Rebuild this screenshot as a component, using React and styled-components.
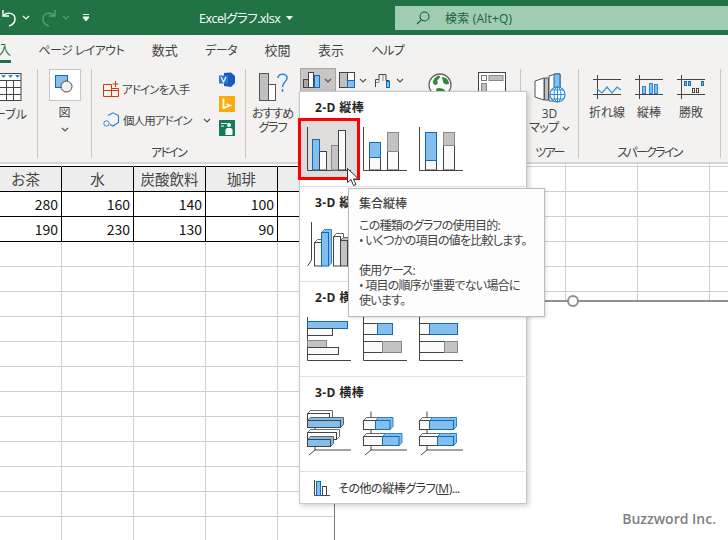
import styled, { createGlobalStyle } from "styled-components";

const GlobalStyle = createGlobalStyle`
  html, body {
    margin: 0;
    padding: 0;
    background: #fff;
  }
  * {
    box-sizing: border-box;
  }
`;

const Page = styled.div`
  position: relative;
  width: 728px;
  height: 540px;
  overflow: hidden;
  background: #fff;
  color: #444;
  font-family: "Open Sans", "Noto Sans CJK JP", sans-serif;
  font-size: 12px;
  font-feature-settings: "palt";
`;

// title bar
const TitleBar = styled.div`
  height: 35px;
  background: #217346;
  display: flex;
  align-items: center;
  color: #fff;
`;

const Qat = styled.div`
  width: 199px;
  display: flex;
  align-items: center;
  padding-left: 2px;
`;

const QatIcon = styled.svg`
  display: block;
  flex: none;
  margin-left: ${(props) => props.$gap || 0}px;
`;

const FileName = styled.div`
  width: 196px;
  display: flex;
  align-items: center;
  gap: 6px;
  font-size: 12.5px;
  letter-spacing: -0.5px;
`;

const SearchBox = styled.div`
  flex: 1;
  height: 24px;
  background: #9fcdb3;
  color: #1f5c3a;
  display: flex;
  align-items: center;
  padding-left: 21px;
  gap: 15px;
  letter-spacing: 0.2px;
`;

// tabs
const TabRow = styled.div`
  height: 29px;
  background: #f3f2f1;
  display: flex;
  gap: 27.5px;
  align-items: stretch;
`;

const Tab = styled.div`
  display: flex;
  align-items: center;
  justify-content: flex-end;
  white-space: nowrap;
  font-size: ${(props) => (props.$kana ? 12 : 13)}px;
  letter-spacing: ${(props) => (props.$kana ? -0.6 : 0)}px;
  padding-top: ${(props) => (props.$active ? 2 : 0)}px;
  ${(props) =>
    props.$active &&
    `
    width: 11px;
    height: 28px;
    border-bottom: 3px solid #217346;
    padding-bottom: 1px;
    color: #217346;
    overflow: hidden;
  `}
`;

// ribbon
const Ribbon = styled.div`
  height: 100px;
  background: #f3f2f1;
  border-bottom: 2px solid #d6d5d4;
  display: flex;
`;

const Group = styled.div`
  width: ${(props) => props.$w}px;
  height: 89px;
  margin-top: 5px;
  flex: none;
  border-right: 1px solid #c8c6c4;
  display: flex;
  flex-direction: column;
  overflow: ${(props) => (props.$clip ? "hidden" : "visible")};
`;

const GroupBody = styled.div`
  flex: 1;
  min-height: 0;
  display: flex;
  justify-content: ${(props) => props.$justify || "flex-start"};
  padding-left: ${(props) => props.$left || 0}px;
`;

const GroupLabel = styled.div`
  height: 14px;
  margin-bottom: -2px;
  line-height: 14px;
  text-align: center;
  white-space: nowrap;
  letter-spacing: -1.7px;
`;

const LargeButton = styled.div`
  width: ${(props) => props.$w}px;
  flex: none;
  display: flex;
  flex-direction: column;
  align-items: ${(props) => props.$align || "center"};
  padding-top: ${(props) => props.$top || 0}px;
  padding-right: ${(props) => props.$right || 0}px;
  line-height: 14px;
  white-space: nowrap;
`;

const TightLabel = styled.div`
  text-align: center;
  letter-spacing: -1px;
`;

const Glyph = styled.svg`
  display: block;
  flex: none;
  margin-bottom: ${(props) => props.$bottom || 0}px;
`;

const ShapeBox = styled.div`
  width: 32px;
  height: 32px;
  background: #fff;
  border: 1px solid #c8c6c4;
  margin-bottom: 5px;
  display: flex;
  align-items: center;
  justify-content: center;
`;

const ChevronGap = styled.div`
  height: 7px;
`;

const AddinList = styled.div`
  width: 116px;
  padding-top: 12px;
  display: flex;
  flex-direction: column;
  gap: 15px;
`;

const AddinRow = styled.div`
  height: 16px;
  display: flex;
  align-items: center;
  gap: 3px;
  white-space: nowrap;
  font-size: 11.5px;
  letter-spacing: -0.9px;
`;

const AddinChevron = styled.div`
  margin-left: auto;
  padding-right: 8px;
`;

const AppIcons = styled.div`
  padding-top: 3px;
  display: flex;
  flex-direction: column;
  gap: 8px;
`;

const ChartButton = styled.div`
  width: ${(props) => props.$w}px;
  height: 24px;
  margin-top: -1px;
  flex: none;
  display: flex;
  align-items: center;
  gap: 3px;
  padding-left: 3px;
  ${(props) =>
    props.$active &&
    `
    background: #c8c6c4;
    border: 1px solid #a8a6a4;
    padding-left: 2px;
  `}
`;

const ChartTools = styled.div`
  display: flex;
  align-items: flex-start;
  margin-left: 1px;
`;

const GlobeIcon = styled.svg`
  display: block;
  flex: none;
  margin: 3px 0 0 15px;
`;

const PivotIcon = styled.svg`
  display: block;
  flex: none;
  margin: 3px 0 0 25px;
`;

const TableIcon = styled.svg`
  display: block;
  flex: none;
  margin: 0 4px 6px 0;
`;

const MapLabel = styled.div`
  display: flex;
  align-items: center;
  gap: 3px;
  letter-spacing: -0.5px;
`;

// sheet
const Sheet = styled.div`
  width: 792px;
  margin-left: -10px;
  display: grid;
  grid-template-columns: repeat(11, 72px);
  grid-auto-rows: 25px;
`;

const Cell = styled.div`
  height: ${(props) => (props.$stub ? 3 : 25)}px;
  border-right: 1px solid ${(props) => (props.$table ? "#000" : "#d0d0d0")};
  border-bottom: 1px solid ${(props) => (props.$edge ? "#000" : "#d0d0d0")};
  background: ${(props) => (props.$head ? "#ededed" : "#fff")};
  color: ${(props) => (props.$head ? "#444" : "#111")};
  display: flex;
  align-items: center;
  justify-content: ${(props) => (props.$head ? "center" : "flex-end")};
  padding-right: ${(props) => (props.$head ? 0 : 3)}px;
  font-family: "Noto Sans CJK JP", sans-serif;
  font-size: ${(props) => (props.$head ? 14.5 : 14)}px;
  font-feature-settings: normal;
  line-height: 1;
  white-space: nowrap;
`;

const StubRow = styled.div`
  grid-column: 1 / -1;
  height: 3px;
  display: grid;
  grid-template-columns: repeat(11, 72px);
  align-self: start;
`;

const SheetBody = styled.div`
  display: grid;
  grid-column: 1 / -1;
  grid-template-columns: repeat(11, 72px);
  grid-auto-rows: 25px;
  margin-top: -22px;
`;

// embedded chart sits over the cells
const ChartFrame = styled.div`
  position: absolute;
  left: 334px;
  top: 300px;
  right: -4px;
  bottom: -4px;
  background: #fff;
  border-top: 2px solid #8f8f8f;
  border-left: 1px solid #777;
`;

const Handle = styled.div`
  position: absolute;
  left: 232px;
  top: -7px;
  width: 12px;
  height: 12px;
  border: 2.5px solid #8f8f8f;
  border-radius: 50%;
  background: #fff;
`;

const Credit = styled.div`
  position: absolute;
  right: 12px;
  bottom: 12px;
  color: #7f7f7f;
  font-size: 14px;
  font-weight: 600;
  line-height: 18px;
`;

// dropdown
const Popup = styled.div`
  position: absolute;
  left: 299px;
  top: 91px;
  width: 228px;
  height: 413px;
  background: #fff;
  border: 1px solid #c6c6c6;
  box-shadow: 2px 2px 5px rgba(0, 0, 0, 0.18);
`;

const Section = styled.div`
  height: 95px;
  position: relative;
  border-bottom: 1px solid #e1dfdd;
  margin-right: 1px;
`;

const SectionTitle = styled.div`
  height: 28px;
  padding: 2px 0 0 15px;
  display: flex;
  align-items: center;
  font-weight: 700;
  letter-spacing: 0.4px;
  color: #252423;
`;

const ThumbRow = styled.div`
  display: flex;
`;

const Thumb = styled.div`
  width: 56px;
  height: 56px;
  background: ${(props) => (props.$selected ? "#dedddc" : "transparent")};
  box-shadow: ${(props) => (props.$selected ? "1px 1px 0 #dedddc" : "none")};
`;

const PopupFooter = styled.div`
  height: 31px;
  display: flex;
  align-items: center;
  gap: 7px;
  padding-left: 13px;
  color: #333;
  letter-spacing: -0.45px;
`;

const Mnemonic = styled.span`
  text-decoration: underline;
`;

const RedFrame = styled.div`
  position: absolute;
  left: 298px;
  top: 118px;
  width: 62px;
  height: 62px;
  border: 3px solid #f00;
`;

const Pointer = styled.svg`
  position: absolute;
  left: 346px;
  top: 167px;
`;

const Tooltip = styled.div`
  position: absolute;
  left: 348px;
  top: 188px;
  width: 197px;
  height: 129px;
  padding: 7px 10px 0;
  background: #fdfdfd;
  border: 1px solid #bdbdbd;
  box-shadow: 1px 1px 3px rgba(0, 0, 0, 0.15);
  line-height: 15px;
`;

const TipTitle = styled.div`
  font-weight: 500;
  margin-bottom: 7px;
`;

const TipLine = styled.div`
  height: 15px;
  white-space: nowrap;
  letter-spacing: -0.75px;
`;

const Chevron = ({ color = "#555" }) => (
  <Glyph width="8" height="5" viewBox="0 0 8 5">
    <path d="M1 1l3 3 3-3" fill="none" stroke={color} strokeWidth="1.2" />
  </Glyph>
);

const FILL = {
  blue: ["#83beec", "#0f6cbd"],
  navy: ["#83beec", "#444"],
  white: ["#fafafa", "#444"],
  grey: ["#c4c3c1", "#8a8886"],
  greyDark: ["#c4c3c1", "#444"],
};

// [x, y, w, h, kind]
const CHARTS = {
  clustered: [
    [12.5, 19.5, 7, 30.5, "blue"],
    [19.5, 31.5, 7, 18.5, "white"],
    [31.5, 25.5, 7, 24.5, "grey"],
    [38.5, 10.5, 7, 39.5, "white"],
  ],
  stacked: [
    [13.5, 37.5, 11, 12.5, "white"],
    [13.5, 22.5, 11, 15, "blue"],
    [31.5, 31.5, 11, 18.5, "white"],
    [31.5, 12.5, 11, 19, "grey"],
  ],
  full: [
    [13.5, 40.5, 11, 9.5, "white"],
    [13.5, 12.5, 11, 28, "blue"],
    [31.5, 25.5, 11, 24.5, "white"],
    [31.5, 12.5, 11, 13, "grey"],
  ],
  barClustered: [
    [7.5, 11.5, 40, 7, "blue"],
    [7.5, 18.5, 25, 7, "white"],
    [7.5, 30.5, 19, 7, "grey"],
    [7.5, 37.5, 31, 7, "white"],
  ],
  barStacked: [
    [7.5, 13.5, 14, 11, "white"],
    [21.5, 13.5, 15, 11, "blue"],
    [7.5, 31.5, 19, 11, "white"],
    [26.5, 31.5, 19, 11, "grey"],
  ],
  barFull: [
    [7.5, 13.5, 10, 11, "white"],
    [17.5, 13.5, 28, 11, "blue"],
    [7.5, 31.5, 25, 11, "white"],
    [32.5, 31.5, 13, 11, "grey"],
  ],
};

const CHARTS_3D = {
  col1: [
    [14.5, 27.5, 7, 23.5, "white"],
    [21.5, 17.5, 7, 33.5, "blue"],
    [33.5, 21.5, 7, 29.5, "white"],
    [40.5, 25.5, 7, 25.5, "greyDark"],
  ],
  col2: [
    [14.5, 35.5, 10, 15, "white"],
    [14.5, 20.5, 10, 15, "blue"],
    [32.5, 30.5, 10, 20, "white"],
    [32.5, 12.5, 10, 18, "greyDark"],
  ],
  col3: [
    [14.5, 38.5, 10, 12, "white"],
    [14.5, 12.5, 10, 26, "blue"],
    [32.5, 26.5, 10, 24, "white"],
    [32.5, 12.5, 10, 14, "greyDark"],
  ],
  bar1: [
    [7.5, 8.5, 22, 7, "white"],
    [7.5, 15.5, 33, 7, "navy"],
    [7.5, 27.5, 29, 7, "white"],
    [7.5, 34.5, 23, 7, "navy"],
  ],
  bar2: [
    [7.5, 15.5, 12, 9, "white"],
    [19.5, 15.5, 14.5, 9, "blue"],
    [7.5, 31.5, 19, 9, "white"],
    [26.5, 31.5, 16.5, 9, "blue"],
  ],
  bar3: [
    [7.5, 15.5, 10, 9, "white"],
    [17.5, 15.5, 24, 9, "blue"],
    [7.5, 31.5, 18, 9, "white"],
    [25.5, 31.5, 16, 9, "blue"],
  ],
};

const ChartThumb = ({ bars }) => (
  <Glyph width="56" height="56" viewBox="0 0 56 56">
    <path d="M7.5 7v43.5H51" fill="none" stroke="#444" strokeWidth="1" />
    {bars.map(([x, y, w, h, kind], i) => (
      <rect key={i} x={x} y={y} width={w} height={h} fill={FILL[kind][0]} stroke={FILL[kind][1]} />
    ))}
  </Glyph>
);

const ChartThumb3D = ({ bars, flat }) => (
  <Glyph width="56" height="56" viewBox="0 0 56 56">
    {flat ? (
      <path d="M15 6.5v38.5H51M15 45l-6 5" fill="none" stroke="#444" strokeWidth="1" />
    ) : (
      <path d="M11.5 7v38l-4 6" fill="none" stroke="#444" strokeWidth="1" />
    )}
    {bars.map(([x, y, w, h, kind], i) => (
      <g key={i} stroke={FILL[kind][1]}>
        <path
          d={`M${x} ${y}l3 -3h${w}v${h}l-3 3z`}
          fill={kind === "white" ? "#fff" : FILL[kind][0]}
          strokeWidth="0.8"
        />
        <rect x={x} y={y} width={w} height={h} fill={FILL[kind][0]} />
      </g>
    ))}
  </Glyph>
);

const BarsSmall = () => (
  <Glyph width="18" height="18" viewBox="0 0 18 18">
    <path d="M1.5 1v15.5H17" fill="none" stroke="#444" />
    <rect x="3.5" y="2.5" width="4" height="14" fill="#83beec" stroke="#0f6cbd" />
    <rect x="9.5" y="7.5" width="4" height="9" fill="#fff" stroke="#444" />
  </Glyph>
);

const Sparkline = ({ children }) => (
  <Glyph width="30" height="24" viewBox="0 0 30 24" $bottom={7}>
    <path d="M1 4.5h28M1 19.5h28M5.5 0v24" fill="none" stroke="#444" />
    {children}
  </Glyph>
);

const HEADERS = ["お茶", "水", "炭酸飲料", "珈琲", ""];
const ROWS = [
  ["280", "160", "140", "100", ""],
  ["190", "230", "130", "90", ""],
];
const BLANK_ROWS = 12;
const columns = Array.from({ length: 11 });

const App = () => {
  return (
    <Page>
      <GlobalStyle />
      <TitleBar>
        <Qat>
          <QatIcon width="14" height="18" viewBox="0 0 14 18">
            <path d="M1 1v6h6M1 7c3-4 12-4 12 3 0 4-3 6-6 7" fill="none" stroke="#fff" strokeWidth="1.4" />
          </QatIcon>
          <QatIcon $gap={6} width="8" height="5" viewBox="0 0 8 5">
            <path d="M1 1l3 3 3-3" fill="none" stroke="#fff" strokeWidth="1.2" />
          </QatIcon>
          <QatIcon $gap={12} width="14" height="18" viewBox="0 0 14 18">
            <path d="M13 1v6H7M13 7C10 3 1 3 1 10c0 4 3 6 6 7" fill="none" stroke="#5a9d7c" strokeWidth="1.4" />
          </QatIcon>
          <QatIcon $gap={6} width="8" height="5" viewBox="0 0 8 5">
            <path d="M1 1l3 3 3-3" fill="none" stroke="#5a9d7c" strokeWidth="1.2" />
          </QatIcon>
          <QatIcon $gap={12} width="8" height="8" viewBox="0 0 8 8">
            <path d="M1 .5h6M1 3l3 4 3-4z" fill="#fff" stroke="#fff" />
          </QatIcon>
        </Qat>
        <FileName>
          Excelグラフ.xlsx
          <svg width="7" height="4" viewBox="0 0 7 4">
            <path d="M0 0h7L3.5 4z" fill="#fff" />
          </svg>
        </FileName>
        <SearchBox>
          <svg width="14" height="14" viewBox="0 0 14 14">
            <circle cx="8.5" cy="5.5" r="4.5" fill="none" stroke="#1f5c3a" strokeWidth="1.1" />
            <path d="M5.2 8.8L1 13" fill="none" stroke="#1f5c3a" strokeWidth="1.2" />
          </svg>
          検索 (Alt+Q)
        </SearchBox>
      </TitleBar>

      <TabRow>
        <Tab $active>挿入</Tab>
        <Tab $kana>ページ レイアウト</Tab>
        <Tab>数式</Tab>
        <Tab $kana>データ</Tab>
        <Tab>校閲</Tab>
        <Tab>表示</Tab>
        <Tab $kana>ヘルプ</Tab>
      </TabRow>

      <Ribbon>
        <Group $w={38} $clip>
          <GroupBody $justify="flex-end">
            <LargeButton $w={38} $top={4} $align="flex-end" $right={10}>
              <TableIcon width="24" height="29" viewBox="0 0 24 29">
                <rect x="-3" y="0.5" width="25" height="27" fill="#fff" stroke="#444" />
                <path d="M-3 7.5h25M-3 14.5h25M-3 21.5h25M7.5 7v21M14.5 7v21" stroke="#444" fill="none" />
                <path d="M2 2h5L4.5 5zM9 2h5l-2.5 3zM16 2h5l-2.5 3z" fill="#2b88d8" />
              </TableIcon>
              テーブル
            </LargeButton>
          </GroupBody>
        </Group>

        <Group $w={54}>
          <GroupBody $justify="center">
            <LargeButton $w={40}>
              <ShapeBox>
                <svg width="22" height="22" viewBox="0 0 22 22">
                  <rect x="1.5" y="1.5" width="12" height="12" fill="#83beec" stroke="#0f6cbd" />
                  <circle cx="12.5" cy="12.5" r="5.5" fill="#f3f2f1" stroke="#444" />
                </svg>
              </ShapeBox>
              図
              <ChevronGap />
              <Chevron />
            </LargeButton>
          </GroupBody>
        </Group>

        <Group $w={154}>
          <GroupBody $left={11}>
            <AddinList>
              <AddinRow>
                <svg width="16" height="16" viewBox="0 0 16 16">
                  <path d="M.5 3.5h8v12h-8zM8.5 7.5h7v8h-7zM.5 9.5h15M12.5 0v6M9.5 3h6" fill="none" stroke="#d83b01" />
                </svg>
                アドインを入手
              </AddinRow>
              <AddinRow>
                <svg width="17" height="16" viewBox="0 0 17 16">
                  <path d="M5 3.5L10 .8l5.5 2.7v7L10 14l-3-1.500" fill="none" stroke="#2b7cd3" strokeWidth="1.1" />
                  <circle cx="3.5" cy="11.5" r="2.7" fill="#fff" stroke="#2b7cd3" />
                </svg>
                個人用アドイン
                <AddinChevron>
                  <Chevron />
                </AddinChevron>
              </AddinRow>
            </AddinList>
            <AppIcons>
              <svg width="16" height="16" viewBox="0 0 16 16">
                <path d="M5 1l7-.5 4 3.500v7l-4 4-7-1z" fill="#185abd" />
                <path d="M0 3.5h9v8H0z" fill="#2b7cd3" />
                <path d="M2 5l2.5 5L7 5" fill="none" stroke="#fff" strokeWidth="1.2" />
              </svg>
              <svg width="16" height="16" viewBox="0 0 16 16">
                <rect width="16" height="16" fill="#f9ac0f" />
                <path d="M4.5 2.5v9.5l6.5-2.5-3.500-1.500" fill="none" stroke="#fff" strokeWidth="1.8" />
              </svg>
              <svg width="16" height="16" viewBox="0 0 16 16">
                <rect width="16" height="16" fill="#107c5a" />
                <path d="M2 3.5h6M2 6h3" stroke="#fff" fill="none" />
                <circle cx="10" cy="5" r="2" fill="#fff" />
                <path d="M6.5 15v-5c0-1 1-2 2-2h3c1 0 2 1 2 2v5z" fill="#fff" />
              </svg>
            </AppIcons>
          </GroupBody>
          <GroupLabel>アドイン</GroupLabel>
        </Group>

        <Group $w={275}>
          <GroupBody>
            <LargeButton $w={53} $top={4}>
              <Glyph width="30" height="28" viewBox="0 0 30 28" $bottom={6}>
                <rect x="1.5" y="0.5" width="9" height="27" fill="#bfbfbd" stroke="#555" />
                <rect x="10.5" y="11.5" width="7" height="16" fill="#fff" stroke="#555" />
                <path d="M20 5c0-5 9-5 9 0 0 4-4.500 4-4.500 9M24.500 16v3" fill="none" stroke="#2b88d8" strokeWidth="1.5" />
              </Glyph>
              <TightLabel>
                おすすめ
                <br />
                グラフ
              </TightLabel>
            </LargeButton>
            <ChartTools>
              <ChartButton $active $w={36}>
                <svg width="18" height="16" viewBox="0 0 18 16">
                  <rect x="0.5" y="7.5" width="5" height="8" fill="#a6a6a6" stroke="#444" />
                  <rect x="5.5" y="0.5" width="5" height="15" fill="#fff" stroke="#444" />
                  <rect x="11.5" y="3.5" width="5" height="12" fill="#83beec" stroke="#0f6cbd" />
                </svg>
                <Chevron />
              </ChartButton>
              <ChartButton $w={36}>
                <svg width="17" height="16" viewBox="0 0 17 16">
                  <rect x="0.5" y="0.5" width="8" height="15" fill="#bfbfbd" stroke="#444" />
                  <rect x="8.5" y="0.5" width="7" height="15" fill="#fff" stroke="#444" />
                  <rect x="8.5" y="8.5" width="7" height="7" fill="#83beec" stroke="#0f6cbd" />
                </svg>
                <Chevron />
              </ChartButton>
              <ChartButton $w={40}>
                <svg width="18" height="16" viewBox="0 0 18 16">
                  <path d="M.5 15V7.500H4V2.500h7V8.500h3V15" fill="none" stroke="#444" />
                  <path d="M4 7.5v3H1M8 2.500V9" fill="none" stroke="#888" />
                  <rect x="11.5" y="9.5" width="3" height="6" fill="#83beec" stroke="#0f6cbd" />
                </svg>
                <Chevron />
              </ChartButton>
              <GlobeIcon width="26" height="28" viewBox="0 0 26 28">
                <circle cx="13" cy="13" r="11" fill="#fff" stroke="#666" strokeWidth="1.3" />
                <path d="M6 9c2-4 5-6 7-5 0 3-2 3-3 5 2 2 0 4-2 4-2-1-2-2-2-4zM15 5c4 0 7 3 7 7-3 1-5 0-6-2 0-2-1-3-1-5zM9 17c3-2 6-1 9 1l-2 5H10z" fill="#2e8b3d" />
              </GlobeIcon>
              <PivotIcon width="30" height="28" viewBox="0 0 30 28">
                <rect x="0.5" y="0.5" width="27" height="27" fill="#fff" stroke="#444" />
                <rect x="3.5" y="3.5" width="5" height="5" fill="#fff" stroke="#777" />
                <rect x="11" y="3.5" width="14" height="5" fill="#bfbfbd" stroke="#888" />
                <rect x="3.5" y="11.5" width="5" height="14" fill="#bfbfbd" stroke="#888" />
              </PivotIcon>
            </ChartTools>
          </GroupBody>
        </Group>

        <Group $w={58}>
          <GroupBody $justify="center">
            <LargeButton $w={57} $top={4}>
              <Glyph width="32" height="30" viewBox="0 0 32 30" $bottom={4}>
                <path d="M1 8l9-3v22l-9-3z" fill="#fff" stroke="#555" />
                <path d="M10.5 5h4v22h-4z" fill="#bfbfbd" stroke="#555" />
                <path d="M15 3l6-2h5v27H15z" fill="#fff" stroke="#555" />
                <path d="M20 1h6v17h-6z" fill="#83beec" stroke="#0f6cbd" />
                <circle cx="23.5" cy="21.5" r="7.5" fill="#fff" stroke="#2b88d8" strokeWidth="1.2" />
                <path d="M16 21.5h15M23.5 14v15M18 17h11M18 26h11" stroke="#2b88d8" fill="none" />
                <ellipse cx="23.5" cy="21.5" rx="3.5" ry="7.5" fill="none" stroke="#2b88d8" />
              </Glyph>
              3D
              <MapLabel>
                マップ
                <Chevron />
              </MapLabel>
            </LargeButton>
          </GroupBody>
          <GroupLabel>ツアー</GroupLabel>
        </Group>

        <Group $w={142}>
          <GroupBody $left={7}>
            <LargeButton $w={42} $top={6}>
              <Sparkline>
                <path d="M5 14l5 4 5-6 5 6 5-6 4 3" fill="none" stroke="#3a96dd" strokeWidth="1.2" />
              </Sparkline>
              折れ線
            </LargeButton>
            <LargeButton $w={42} $top={6}>
              <Sparkline>
                <rect x="8.5" y="11.5" width="3" height="7" fill="#83beec" stroke="#2b88d8" />
                <rect x="15.5" y="8.5" width="3" height="10" fill="#83beec" stroke="#2b88d8" />
                <rect x="20.5" y="9.5" width="3" height="9" fill="#83beec" stroke="#2b88d8" />
              </Sparkline>
              縦棒
            </LargeButton>
            <LargeButton $w={42} $top={6}>
              <Sparkline>
                <rect x="8.5" y="6.5" width="2" height="4" fill="#83beec" stroke="#0f6cbd" />
                <rect x="12.5" y="6.5" width="2" height="4" fill="#83beec" stroke="#0f6cbd" />
                <rect x="16.5" y="13.5" width="2" height="4" fill="#fff" stroke="#444" />
                <rect x="20.5" y="13.5" width="2" height="4" fill="#fff" stroke="#444" />
                <rect x="25.5" y="6.5" width="2" height="4" fill="#83beec" stroke="#0f6cbd" />
              </Sparkline>
              勝敗
            </LargeButton>
          </GroupBody>
          <GroupLabel>スパークライン</GroupLabel>
        </Group>
      </Ribbon>

      <Sheet>
        <StubRow>
          {columns.map((_, i) => (
            <Cell key={i} $stub $edge={i < 6} />
          ))}
        </StubRow>
        <SheetBody>
          {columns.map((_, i) => (
            <Cell key={i} $head={i < 5} $table={i < 6} $edge={i < 6}>
              {HEADERS[i]}
            </Cell>
          ))}
          {ROWS.map((row, r) =>
            columns.map((_, i) => (
              <Cell key={`${r}-${i}`} $table={i < 6} $edge={i < 6}>
                {row[i]}
              </Cell>
            ))
          )}
          {Array.from({ length: BLANK_ROWS * 11 }).map((_, i) => (
            <Cell key={`blank-${i}`} />
          ))}
        </SheetBody>
      </Sheet>

      <ChartFrame>
        <Handle />
      </ChartFrame>
      <Credit>Buzzword Inc.</Credit>

      <Popup>
        <Section>
          <SectionTitle>2-D 縦棒</SectionTitle>
          <ThumbRow>
            <Thumb $selected>
              <ChartThumb bars={CHARTS.clustered} />
            </Thumb>
            <Thumb>
              <ChartThumb bars={CHARTS.stacked} />
            </Thumb>
            <Thumb>
              <ChartThumb bars={CHARTS.full} />
            </Thumb>
          </ThumbRow>
        </Section>
        <Section>
          <SectionTitle>3-D 縦棒</SectionTitle>
          <ThumbRow>
            <Thumb>
              <ChartThumb3D bars={CHARTS_3D.col1} />
            </Thumb>
            <Thumb>
              <ChartThumb3D bars={CHARTS_3D.col2} />
            </Thumb>
            <Thumb>
              <ChartThumb3D bars={CHARTS_3D.col3} />
            </Thumb>
          </ThumbRow>
        </Section>
        <Section>
          <SectionTitle>2-D 横棒</SectionTitle>
          <ThumbRow>
            <Thumb>
              <ChartThumb bars={CHARTS.barClustered} />
            </Thumb>
            <Thumb>
              <ChartThumb bars={CHARTS.barStacked} />
            </Thumb>
            <Thumb>
              <ChartThumb bars={CHARTS.barFull} />
            </Thumb>
          </ThumbRow>
        </Section>
        <Section>
          <SectionTitle>3-D 横棒</SectionTitle>
          <ThumbRow>
            <Thumb>
              <ChartThumb3D flat bars={CHARTS_3D.bar1} />
            </Thumb>
            <Thumb>
              <ChartThumb3D flat bars={CHARTS_3D.bar2} />
            </Thumb>
            <Thumb>
              <ChartThumb3D flat bars={CHARTS_3D.bar3} />
            </Thumb>
          </ThumbRow>
        </Section>
        <PopupFooter>
          <BarsSmall />
          <span>
            その他の縦棒グラフ(<Mnemonic>M</Mnemonic>)...
          </span>
        </PopupFooter>
      </Popup>

      <RedFrame />
      <Pointer width="14" height="22" viewBox="0 0 14 22">
        <path d="M1.5 1.5v14l3.5-3 2.5 6 2.5-1-2.5-5.500h5z" fill="#fff" stroke="#333" />
      </Pointer>

      <Tooltip>
        <TipTitle>集合縦棒</TipTitle>
        <TipLine>この種類のグラフの使用目的:</TipLine>
        <TipLine>• いくつかの項目の値を比較します。</TipLine>
        <TipLine />
        <TipLine>使用ケース:</TipLine>
        <TipLine>• 項目の順序が重要でない場合に</TipLine>
        <TipLine>使います。</TipLine>
      </Tooltip>
    </Page>
  );
};

export default App;
